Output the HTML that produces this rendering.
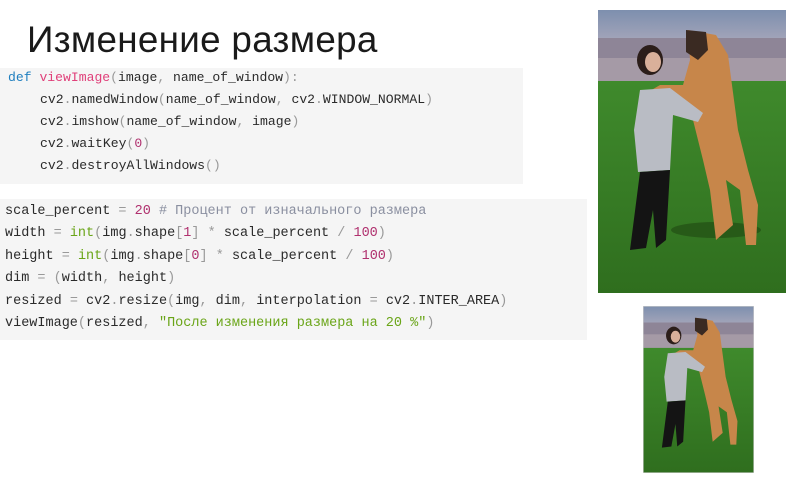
<!DOCTYPE html>
<html><head><meta charset="utf-8"><style>
body{margin:0;width:799px;height:480px;background:#fff;position:relative;overflow:hidden;font-family:"Liberation Sans",sans-serif}
.t{position:absolute;left:27px;top:19px;font-size:36.8px;font-weight:300;color:#1a1a1a;letter-spacing:0.3px}
.cb{position:absolute;background:#f5f5f5;font-family:"Liberation Mono",monospace;color:#2a2a2a;white-space:pre}
.cb div{position:absolute;left:0}
.k{color:#1f7fbf}.f{color:#e0407a}.n{color:#b0306e}.g{color:#999}.c{color:#8a8fa0}.b{color:#6aa518}.s{color:#6aa518}
.img{position:absolute;overflow:hidden}
</style></head><body>
<div class="t">Изменение размера</div>
<div class="cb" style="left:0;top:68px;width:523px;height:116px;font-size:13.1px">
<div style="top:2px;left:8px"><span class="k">def</span> <span class="f">viewImage</span><span class="g">(</span>image<span class="g">,</span> name_of_window<span class="g">):</span></div>
<div style="top:24px;left:40px">cv2<span class="g">.</span>namedWindow<span class="g">(</span>name_of_window<span class="g">,</span> cv2<span class="g">.</span>WINDOW_NORMAL<span class="g">)</span></div>
<div style="top:46px;left:40px">cv2<span class="g">.</span>imshow<span class="g">(</span>name_of_window<span class="g">,</span> image<span class="g">)</span></div>
<div style="top:68px;left:40px">cv2<span class="g">.</span>waitKey<span class="g">(</span><span class="n">0</span><span class="g">)</span></div>
<div style="top:90px;left:40px">cv2<span class="g">.</span>destroyAllWindows<span class="g">()</span></div>
</div>
<div class="cb" style="left:0;top:199px;width:587px;height:141px;font-size:13.5px">
<div style="top:5px;left:5px">scale_percent <span class="g">=</span> <span class="n">20</span> <span class="c"># Процент от изначального размера</span></div>
<div style="top:27px;left:5px">width <span class="g">=</span> <span class="b">int</span><span class="g">(</span>img<span class="g">.</span>shape<span class="g">[</span><span class="n">1</span><span class="g">]</span> <span class="g">*</span> scale_percent <span class="g">/</span> <span class="n">100</span><span class="g">)</span></div>
<div style="top:50px;left:5px">height <span class="g">=</span> <span class="b">int</span><span class="g">(</span>img<span class="g">.</span>shape<span class="g">[</span><span class="n">0</span><span class="g">]</span> <span class="g">*</span> scale_percent <span class="g">/</span> <span class="n">100</span><span class="g">)</span></div>
<div style="top:72px;left:5px">dim <span class="g">=</span> <span class="g">(</span>width<span class="g">,</span> height<span class="g">)</span></div>
<div style="top:95px;left:5px">resized <span class="g">=</span> cv2<span class="g">.</span>resize<span class="g">(</span>img<span class="g">,</span> dim<span class="g">,</span> interpolation <span class="g">=</span> cv2<span class="g">.</span>INTER_AREA<span class="g">)</span></div>
<div style="top:117px;left:5px">viewImage<span class="g">(</span>resized<span class="g">,</span> <span class="s">"После изменения размера на 20 %"</span><span class="g">)</span></div>
</div>
<svg class="img" style="left:598px;top:10px" width="188" height="283" viewBox="0 0 188 283" preserveAspectRatio="none">
<defs><linearGradient id="sk" x1="0" y1="0" x2="0" y2="1"><stop offset="0" stop-color="#7d8fae"/><stop offset="1" stop-color="#a9a8bb"/></linearGradient>
<linearGradient id="gr" x1="0" y1="0" x2="0" y2="1"><stop offset="0" stop-color="#3f8a2c"/><stop offset="1" stop-color="#2f6e1e"/></linearGradient></defs>
<rect width="188" height="35" fill="url(#sk)"/><rect y="28" width="188" height="28" fill="#8e8597"/><rect y="48" width="188" height="24" fill="#a59aa6"/>
<rect y="71" width="188" height="212" fill="url(#gr)"/>
<ellipse cx="118" cy="220" rx="45" ry="8" fill="#275a18"/>
<path d="M90 20 L118 25 L130 45 L140 120 L150 160 L160 195 L158 235 L148 235 L142 180 L128 170 L135 215 L118 230 L112 180 L105 150 L95 110 L80 95 L60 90 L45 85 L62 75 L85 75 L92 50 Z" fill="#c7864a"/>
<path d="M88 20 L108 22 L110 40 L100 50 L88 42 Z" fill="#3a2a22"/>
<ellipse cx="52" cy="50" rx="13" ry="15" fill="#2c1e1a"/><ellipse cx="55" cy="52" rx="8" ry="10" fill="#d9b09a"/>
<path d="M42 80 L72 78 L105 103 L100 112 L75 105 L72 160 L40 162 L36 120 Z" fill="#b9bcc4"/>
<path d="M42 162 L72 160 L68 230 L58 238 L55 200 L48 238 L32 240 Z" fill="#141414"/>
</svg>
<svg class="img" style="left:643px;top:306px" width="111" height="167" viewBox="0 0 188 283" preserveAspectRatio="none">
<rect width="188" height="35" fill="url(#sk)"/><rect y="28" width="188" height="28" fill="#8e8597"/><rect y="48" width="188" height="24" fill="#a59aa6"/>
<rect y="71" width="188" height="212" fill="url(#gr)"/>
<path d="M90 20 L118 25 L130 45 L140 120 L150 160 L160 195 L158 235 L148 235 L142 180 L128 170 L135 215 L118 230 L112 180 L105 150 L95 110 L80 95 L60 90 L45 85 L62 75 L85 75 L92 50 Z" fill="#c7864a"/>
<path d="M88 20 L108 22 L110 40 L100 50 L88 42 Z" fill="#3a2a22"/>
<ellipse cx="52" cy="50" rx="13" ry="15" fill="#2c1e1a"/><ellipse cx="55" cy="52" rx="8" ry="10" fill="#d9b09a"/>
<path d="M42 80 L72 78 L105 103 L100 112 L75 105 L72 160 L40 162 L36 120 Z" fill="#b9bcc4"/>
<path d="M42 162 L72 160 L68 230 L58 238 L55 200 L48 238 L32 240 Z" fill="#141414"/>
<rect x="0.5" y="0.5" width="187" height="282" fill="none" stroke="#ccc"/>
</svg>
</body></html>
